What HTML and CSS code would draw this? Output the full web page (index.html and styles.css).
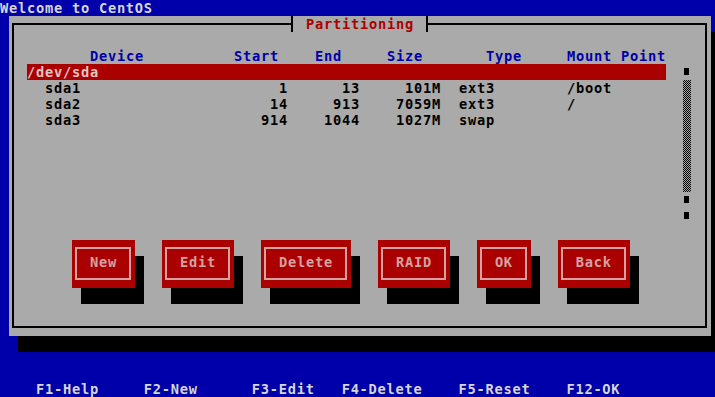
FILE: index.html
```html
<!DOCTYPE html>
<html lang="en">

<head>
  <meta charset="UTF-8">
  <meta name="viewport" content="width=device-width, initial-scale=1.0">
  <title>Partitioning</title>
  <link rel="stylesheet" href="styles.css">
</head>

<body>
  <div class="screen">
    <div class="root-text">Welcome to CentOS</div>

    <div class="dialog">
      <div class="dialog-title">
        <span class="tee tee-left"></span>
        <span class="title-text">Partitioning</span>
        <span class="tee tee-right"></span>
      </div>

      <div class="frame">
        <div class="part-row part-head">
          <span class="c-dev">Device</span>
          <span class="c-start">Start</span>
          <span class="c-end">End</span>
          <span class="c-size">Size</span>
          <span class="c-type">Type</span>
          <span class="c-mount">Mount Point</span>
        </div>

        <div class="listbox">
          <div class="part-list">
            <div class="part-row drive selected">
              <span class="c-dev">/dev/sda</span>
            </div>
            <div class="part-row">
              <span class="c-dev">sda1</span>
              <span class="c-start">1</span>
              <span class="c-end">13</span>
              <span class="c-size">101M</span>
              <span class="c-type">ext3</span>
              <span class="c-mount">/boot</span>
            </div>
            <div class="part-row">
              <span class="c-dev">sda2</span>
              <span class="c-start">14</span>
              <span class="c-end">913</span>
              <span class="c-size">7059M</span>
              <span class="c-type">ext3</span>
              <span class="c-mount">/</span>
            </div>
            <div class="part-row">
              <span class="c-dev">sda3</span>
              <span class="c-start">914</span>
              <span class="c-end">1044</span>
              <span class="c-size">1027M</span>
              <span class="c-type">swap</span>
              <span class="c-mount"></span>
            </div>
          </div>

          <div class="scrollbar">
            <span class="scroll-mark"></span>
            <span class="scroll-track"></span>
            <span class="scroll-mark"></span>
            <span class="scroll-mark"></span>
          </div>
        </div>

        <div class="buttons">
          <button class="btn"><span>New</span></button>
          <button class="btn"><span>Edit</span></button>
          <button class="btn"><span>Delete</span></button>
          <button class="btn"><span>RAID</span></button>
          <button class="btn"><span>OK</span></button>
          <button class="btn"><span>Back</span></button>
        </div>
      </div>
    </div>

    <div class="helpline">    F1-Help     F2-New      F3-Edit   F4-Delete    F5-Reset    F12-OK</div>
  </div>
</body>

</html>
```

FILE: styles.css
```css
/* 80x25 text screen, every cell is 9x16 */
html,
body {
  margin: 0;
  overflow: hidden;
}

body {
  background: #0000aa;
  font-family: "DejaVu Sans Mono", "Liberation Mono", monospace;
  font-size: 13.7px;
  font-weight: bold;
  letter-spacing: 0.75px;
  line-height: 16px;
}

.screen {
  width: 720px;
  height: 400px;
  display: flex;
  flex-direction: column;
  color: #d6d6d6;
}

.root-text {
  height: 16px;
}

.dialog {
  position: relative;
  width: 702px;
  height: 320px;
  margin-left: 9px;
  box-sizing: border-box;
  padding: 7px 4px 8px 3px;
  background: #aaaaaa;
  box-shadow: 9px 16px 0 #000;
  color: #000;
}

.frame {
  height: 100%;
  box-sizing: border-box;
  border: 2px solid #000;
  padding: 23px 0 0 4px;
}

.dialog-title {
  position: absolute;
  top: 0;
  left: 279px;
  display: flex;
  height: 16px;
  color: #aa0000;
}

.tee {
  width: 9px;
}

.tee-left {
  background: linear-gradient(to right, transparent 3px, #000 3px, #000 5px, #aaaaaa 5px);
}

.tee-right {
  background: linear-gradient(to right, #aaaaaa 3px, #000 3px, #000 5px, transparent 5px);
}

.title-text {
  padding: 0 9px;
  background: #aaaaaa;
}

/* partition table */
.part-row {
  display: grid;
  grid-template-columns: 180px 81px 72px 81px 126px 99px;
  height: 16px;
  white-space: pre;
}

.part-row .c-start,
.part-row .c-end,
.part-row .c-size {
  text-align: right;
}

.part-row .c-dev,
.part-row .c-type {
  padding-left: 18px;
}

.part-head {
  margin-left: 9px;
  color: #0000aa;
}

.part-head .c-dev {
  padding-left: 63px;
}

.part-head .c-start {
  padding-right: 9px;
}

.part-head .c-end,
.part-head .c-size {
  padding-right: 18px;
}

.part-head .c-type {
  padding-left: 45px;
}

.listbox {
  display: flex;
  height: 160px;
  margin-left: 9px;
}

.part-list {
  width: 639px;
}

.part-row.selected {
  background: #aa0000;
  color: #e2c4c4;
}

.part-row.drive .c-dev {
  padding-left: 0;
}

.scrollbar {
  display: flex;
  flex-direction: column;
  width: 8px;
  margin-left: 17px;
}

.scroll-mark {
  height: 16px;
}

.scroll-mark::before {
  content: "";
  display: block;
  width: 5px;
  height: 7px;
  margin: 4px 0 0 1px;
  background: #000;
}

.scroll-track {
  height: 112px;
  background: repeating-conic-gradient(#000 0 25%, #aaaaaa 0 50%) 0 0 / 2px 2px;
}

/* buttons */
.buttons {
  display: flex;
  gap: 27px;
  margin: 16px 0 0 54px;
}

.btn {
  height: 48px;
  box-sizing: border-box;
  margin: 0;
  padding: 7px 4px 8px 3px;
  border: 0;
  border-radius: 0;
  background: #aa0000;
  box-shadow: 9px 16px 0 #000;
  color: #d4a2a2;
  font: inherit;
  letter-spacing: inherit;
}

.btn span {
  display: block;
  height: 100%;
  box-sizing: border-box;
  border: 2px solid currentColor;
  padding: 5px 12px 0 13px;
}

.helpline {
  margin: auto 0 3px;
  height: 16px;
  white-space: pre;
}
```
